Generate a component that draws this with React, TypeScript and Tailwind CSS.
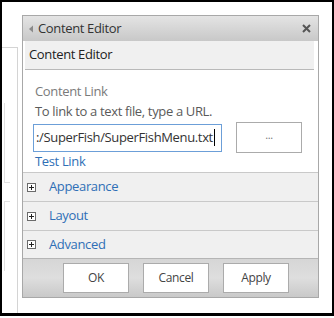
const FONT = { fontFamily: '"Open Sans", "Noto Sans", Arial, sans-serif' };

function PlusBox() {
  return (
    <span className="flex h-[9px] w-[9px] items-center justify-center border border-[#6b6b6b] bg-white">
      <svg width="7" height="7" viewBox="0 0 7 7">
        <path d="M3.5 1v5M1 3.5h5" stroke="#222" strokeWidth="1" />
      </svg>
    </span>
  );
}

function Section({ label, short }: { label: string; short?: boolean }) {
  return (
    <div
      className={`flex items-center gap-[13px] border-t border-[#c9c9c9] bg-[#f0f0f0] pl-[4px] ${
        short ? "h-[28px]" : "h-[29px]"
      }`}
    >
      <PlusBox />
      <span className="text-[13px] text-[#2f6fb6]">{label}</span>
    </div>
  );
}

function FooterButton({ label }: { label: string }) {
  return (
    <button className="h-[30px] w-[66px] border border-[#ababab] bg-white text-[12px] text-[#444]">
      {label}
    </button>
  );
}

export default function App() {
  return (
    <div className="h-[318px] w-[334px] bg-white tracking-[-0.35px]" style={FONT}>
      <div className="flex h-[316px] w-[334px] border-x-2 border-t-2 border-b-[3px] border-black bg-white">
        {/* left page column */}
        <div className="mt-[45px] flex w-[16px] flex-col border-t border-r border-[#d4d4d4]">
          <div className="ml-[2px] mt-[55px] h-[80px] w-[6px] border-l border-b border-[#e0e0e0]" />
          <div className="ml-[2px] mt-[18px] h-[70px] w-[6px] border-l border-t border-[#e0e0e0]" />
        </div>

        {/* tool pane */}
        <div className="ml-[4px] mt-[13px] flex h-[283px] w-[297px] flex-col self-start border border-[#a8a8a8]">
          <div className="flex h-[25px] items-center bg-gradient-to-b from-[#e4e4e4] to-[#c8c8c8] pl-[5px] pr-[7px]">
            <svg width="6" height="8" viewBox="0 0 6 8" className="mr-[4px]">
              <path d="M5 0.5v7L1 4z" fill="#8a8a8a" />
            </svg>
            <span className="flex-1 text-[13px] text-[#333]">Content Editor</span>
            <svg width="9" height="9" viewBox="0 0 9 9">
              <path d="M1 1l7 7M8 1l-7 7" stroke="#555" strokeWidth="2" />
            </svg>
          </div>

          <div className="ml-[2px] mr-[4px] flex h-[29px] items-center border-b border-[#b9b9b9] bg-[#f0f0f0] pl-[4px]">
            <span className="text-[13px] text-[#222]">Content Editor</span>
          </div>

          <div className="flex flex-col pl-[12px] pt-[12px]">
            <div className="text-[13px] leading-[19px] text-[#7a7a7a]">Content Link</div>
            <div className="mt-px text-[13px] leading-[19px] text-[#5a5a5a]">
              To link to a text file, type a URL.
            </div>
            <div className="mt-[1px] flex items-center gap-[14px]">
              <div className="-ml-[2px] flex h-[28px] w-[189px] items-center overflow-hidden border border-[#6c9fd8] pl-[2px] text-[13px] text-[#333]">
                <span className="whitespace-nowrap">:/SuperFish/SuperFishMenu.txt</span>
                <span className="ml-px h-[17px] w-px shrink-0 bg-black" />
              </div>
              <button className="h-[31px] w-[66px] border border-[#ababab] bg-white pb-[4px] text-[11px] text-[#777]">
                ...
              </button>
            </div>
            <div className="-mt-[1px] h-[20px] text-[13px] leading-[19px] text-[#2f6fb6]">Test Link</div>
          </div>

          <Section label="Appearance" />
          <Section label="Layout" />
          <Section label="Advanced" short />

          <div className="flex flex-1 items-start gap-[14px] border-t border-[#b5b5b5] bg-gradient-to-b from-[#d6d6d6] via-[#dedede] to-[#c9c9c9] pl-[40px] pt-[4px]">
            <FooterButton label="OK" />
            <FooterButton label="Cancel" />
            <FooterButton label="Apply" />
          </div>
        </div>
      </div>
    </div>
  );
}
